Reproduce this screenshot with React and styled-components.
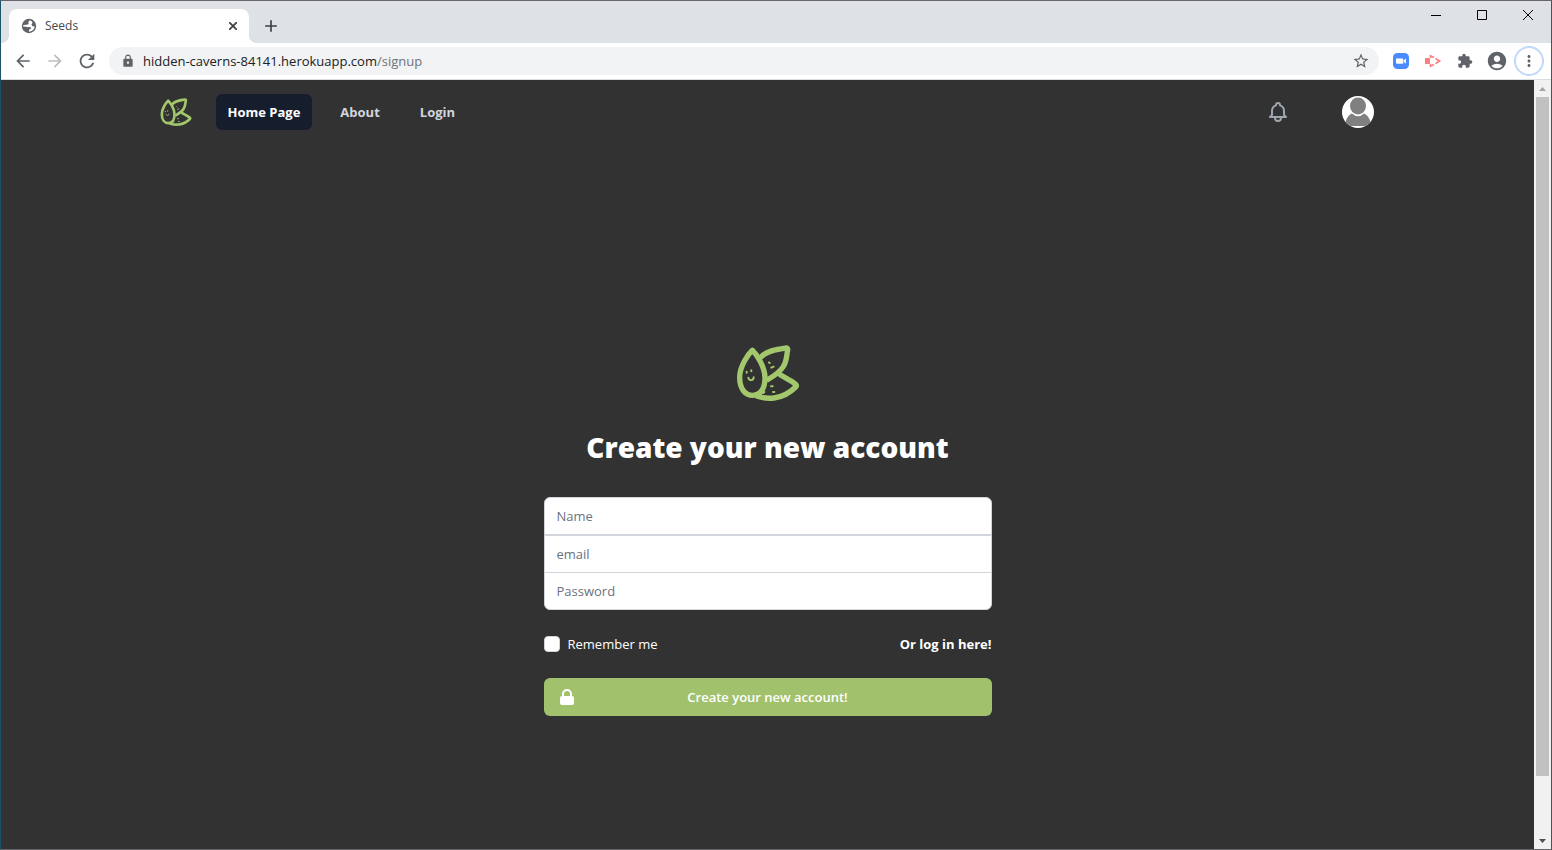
import React from "react";
import styled, { createGlobalStyle, css } from "styled-components";
import {
  MdArrowBack,
  MdArrowForward,
  MdRefresh,
  MdLock,
  MdStarBorder,
  MdExtension,
  MdAccountCircle,
  MdMoreVert,
  MdAdd,
} from "react-icons/md";

const GlobalStyle = createGlobalStyle`
  *, *::before, *::after { box-sizing: border-box; }
  body {
    margin: 0;
    font-family: "Open Sans", "Noto Sans", sans-serif;
    font-size: 13px;
    line-height: 20px;
  }
  button, input { font: inherit; margin: 0; }
  button { padding: 0; border: 0; background: none; color: inherit; cursor: pointer; }
  a { text-decoration: none; }
  h1 { margin: 0; }
  svg { display: block; flex-shrink: 0; }
`;

const Window = styled.div`
  display: flex;
  flex-direction: column;
  height: 100vh;
  border: 1px solid #666668;
  border-left-color: #1b5468;
  border-right-color: #4b5066;
  background: #323232;
`;

/* Browser frame */

const TabStrip = styled.div`
  display: flex;
  flex-shrink: 0;
  height: 42px;
  padding-left: 8px;
  background: #dee1e6;
`;

const flare = css`
  content: "";
  position: absolute;
  bottom: 0;
  width: 8px;
  height: 8px;
`;

const Tab = styled.div`
  position: relative;
  display: flex;
  align-items: center;
  gap: 8px;
  width: 240px;
  margin-top: 8px;
  padding: 0 8px 0 12px;
  border-radius: 8px 8px 0 0;
  background: #fff;
  color: #45494d;
  font-size: 12px;

  &::before {
    ${flare}
    left: -8px;
    background: radial-gradient(circle at 0 0, #dee1e6 8px, #fff 8px);
  }
  &::after {
    ${flare}
    right: -8px;
    background: radial-gradient(circle at 100% 0, #dee1e6 8px, #fff 8px);
  }
`;

const TabTitle = styled.span`
  flex: 1;
`;

const IconButton = styled.button`
  display: flex;
  align-items: center;
  justify-content: center;
  flex-shrink: 0;
  width: ${(p) => p.$size || 28}px;
  height: ${(p) => p.$size || 28}px;
  border-radius: 50%;
  color: ${(p) => p.$color || "#5f6368"};
  ${(p) => p.$ring && "box-shadow: 0 0 0 1px #bcd4f8, inset 0 0 0 1px #bcd4f8;"}
`;

const NewTab = styled(IconButton)`
  margin: 11px 0 0 8px;
`;

const WindowControls = styled.div`
  display: flex;
  margin-left: auto;
`;

const WindowControl = styled.button`
  display: flex;
  align-items: center;
  justify-content: center;
  width: 46px;
  height: 28px;
`;

const Toolbar = styled.div`
  display: flex;
  align-items: center;
  gap: 8px;
  flex-shrink: 0;
  height: 37px;
  padding: 0 8px;
  border-bottom: 1px solid #dadce0;
  background: #fff;
`;

const ToolGroup = styled.div`
  display: flex;
  gap: 4px;
`;

const AddressBar = styled.div`
  display: flex;
  align-items: center;
  flex: 1;
  gap: 8px;
  min-width: 0;
  height: 28px;
  padding: 0 4px 0 12px;
  border-radius: 14px;
  background: #f1f3f4;
  color: #5f6368;
`;

const Address = styled.div`
  flex: 1;
  overflow: hidden;
  white-space: nowrap;
  color: #6f7377;
`;

const Host = styled.span`
  color: #202124;
`;

const Body = styled.div`
  display: flex;
  flex: 1;
  min-height: 0;
`;

const Viewport = styled.div`
  flex: 1;
  min-width: 0;
  overflow-y: auto;
  scrollbar-width: none;
`;

const ScrollBar = styled.div`
  display: flex;
  flex-direction: column;
  width: 17px;
  background: #f1f1f1;
`;

const ScrollButton = styled.button`
  display: flex;
  align-items: center;
  justify-content: center;
  width: 17px;
  height: 17px;
`;

const ScrollTrack = styled.div`
  flex: 1;
  padding: 0 2px;
`;

const ScrollThumb = styled.div`
  height: 92.4%;
  background: #c1c1c1;
`;

/* Page */

const NavBar = styled.nav`
  display: flex;
  align-items: center;
  max-width: 1280px;
  height: 64px;
  margin: 0 auto;
  padding: 0 34px 0 32px;
`;

const NavLinks = styled.div`
  display: flex;
  gap: 16px;
  margin-left: 24px;
`;

const NavLink = styled.a`
  padding: 8px 12px;
  border-radius: 6px;
  background: ${(p) => (p.$active ? "#161e2e" : "transparent")};
  color: ${(p) => (p.$active ? "#fff" : "#d2d6dc")};
  font-weight: 700;
`;

const NavActions = styled.div`
  display: flex;
  align-items: center;
  gap: 48px;
  margin-left: auto;
`;

const Main = styled.main`
  display: flex;
  align-items: center;
  justify-content: center;
  min-height: 100%;
  padding: 48px 32px;
`;

const SignUp = styled.form`
  display: flex;
  flex-direction: column;
  align-items: stretch;
  gap: 24px;
  width: 100%;
  max-width: 448px;
`;

const Brand = styled.header`
  display: flex;
  flex-direction: column;
  align-items: center;
  gap: 24px;
  margin-bottom: 8px;
`;

const Title = styled.h1`
  color: #fff;
  font-size: 28px;
  font-weight: 800;
  line-height: 36px;
  text-align: center;
  white-space: nowrap;
`;

const Fields = styled.div`
  display: flex;
  flex-direction: column;
`;

const Field = styled.input`
  width: 100%;
  height: 38px;
  padding: 8px 12px;
  border: 1px solid #d2d6dc;
  border-radius: 0;
  outline: 0;
  background: #fff;
  color: #161e2e;

  &::placeholder { color: #6b7280; opacity: 1; }
  &:first-child { border-radius: 6px 6px 0 0; }
  &:last-child { margin-top: -1px; border-radius: 0 0 6px 6px; }
`;

const Options = styled.div`
  display: flex;
  align-items: center;
  justify-content: space-between;
  color: #fff;
`;

const Remember = styled.label`
  display: flex;
  align-items: center;
  gap: 8px;
`;

const CheckBox = styled.input`
  appearance: none;
  width: 16px;
  height: 16px;
  border: 1px solid #d2d6dc;
  border-radius: 4px;
  background: #fff;

  &:checked { background: #a2c16d; }
`;

const LogInLink = styled.a`
  color: #fff;
  font-weight: 700;
`;

const Submit = styled.button`
  display: grid;
  grid-template-columns: 20px 1fr 20px;
  align-items: center;
  height: 38px;
  padding: 0 13px;
  border-radius: 6px;
  background: #a2c16d;
  color: #fff;
  font-weight: 600;
`;

function SeedsLogo({ size }) {
  return (
    <svg width={size} height={size} viewBox="48 18 192 192" fill="none" stroke="#a2c76c" strokeLinecap="round" strokeLinejoin="round" role="img" aria-label="Seeds">
      <g strokeWidth="16">
        <path d="M97 46C86 56 59 93 59 127C59 161 75 181 98 181C123 181 135 158 135 129C135 93 108 56 97 46Z" />
        <path d="M123 66C142 45 173 44 197 39Q204 38 203 45C199 63 201 79 189 96C180 111 163 122 145 133" />
        <path d="M180 119C193 128 214 136 227 148Q231 152 227 156C212 171 191 185 162 189Q137 192 112 184" />
      </g>
      <g strokeWidth="6">
        <path d="M80 110v3M94 106v3M85 128C87 138 101 138 101 127" />
        <path d="M147 82l2 2M161 95l-7 3M153 154h5M159 171h4M133 171l-3 3" />
      </g>
    </svg>
  );
}

function GlobeIcon() {
  return (
    <svg width="16" height="16" viewBox="0 0 16 16" aria-hidden="true">
      <circle cx="8" cy="8" r="7.2" fill="#5f6368" />
      <path fill="#fff" d="M8.6 2.3L7.2 4.3L7.8 6L5.8 6.8L2.3 6.9L2.2 8.6L5 8.7L6.9 9.2L9.4 9L10.2 10.6L8.2 11.6L7.8 13.8C11 13.8 13.3 11.6 13.8 8.6L11.6 8.3L10.4 6.7L11.6 4.6L10.4 3Z" />
    </svg>
  );
}

function CloseIcon() {
  return (
    <svg width="8" height="8" viewBox="0 0 8 8" stroke="#3c4043" strokeWidth="1.7" aria-hidden="true">
      <path d="M0 0L8 8M8 0L0 8" />
    </svg>
  );
}

function ZoomIcon() {
  return (
    <svg width="16" height="16" viewBox="0 0 16 16" aria-hidden="true">
      <rect width="16" height="16" rx="4.5" fill="#4a8cff" />
      <path fill="#fff" d="M3 5.4h6q1.2 0 1.2 1.2v4.2H4.4Q3 10.8 3 9.4ZM10.8 7.2L13 5.5v5.1l-2.2-1.5Z" />
    </svg>
  );
}

function RecorderIcon() {
  return (
    <svg width="16" height="16" viewBox="0 0 16 16" aria-hidden="true">
      <path fill="#ff7f7f" d="M0 5h5v6H0Z" />
      <path d="M5.5 5V2.7L9 4.5M10.5 5.3L14.5 8L10.5 10.7M9 11.5L5.5 13.3V11" fill="none" stroke="#ff7f7f" strokeWidth="1.6" />
      <path fill="#ff7f7f" d="M12.5 6.3L16 8l-3.5 1.7Z" />
    </svg>
  );
}

function BellIcon() {
  return (
    <svg width="24" height="24" viewBox="0 0 24 24" fill="none" stroke="#9fa6b2" strokeWidth="2" strokeLinecap="round" strokeLinejoin="round" aria-hidden="true">
      <path d="M15 17h5l-1.405-1.405A2.032 2.032 0 0118 14.158V11a6.002 6.002 0 00-4-5.659V5a2 2 0 10-4 0v.341C7.67 6.165 6 8.388 6 11v3.159c0 .538-.214 1.055-.595 1.436L4 17h5m6 0v1a3 3 0 11-6 0v-1m6 0H9" />
    </svg>
  );
}

function Avatar() {
  return (
    <svg width="32" height="32" viewBox="0 0 32 32" aria-hidden="true">
      <defs>
        <clipPath id="avatar-clip"><circle cx="16" cy="16" r="16" /></clipPath>
      </defs>
      <g clipPath="url(#avatar-clip)">
        <rect width="32" height="32" fill="#fff" />
        <path d="M3 30C3.500 23 6 19.500 10 17.500Q16 23 22 17.500C26 19.500 28.500 23 29 30Z" fill="#808080" />
        <ellipse cx="16" cy="10" rx="9" ry="9.500" fill="#fff" />
        <ellipse cx="16" cy="10" rx="8" ry="8.500" fill="#808080" />
      </g>
    </svg>
  );
}

function LockIcon() {
  return (
    <svg width="20" height="20" viewBox="0 0 20 20" fill="#fff" aria-hidden="true">
      <path fillRule="evenodd" clipRule="evenodd" d="M5 9V7a5 5 0 0110 0v2a2 2 0 012 2v5a2 2 0 01-2 2H5a2 2 0 01-2-2v-5a2 2 0 012-2zm8-2v2H7V7a3 3 0 016 0z" />
    </svg>
  );
}

function BrowserFrame() {
  return (
    <>
      <TabStrip>
        <Tab>
          <GlobeIcon />
          <TabTitle>Seeds</TabTitle>
          <IconButton $size={16} aria-label="Close tab"><CloseIcon /></IconButton>
        </Tab>
        <NewTab aria-label="New tab" $color="#3c4043"><MdAdd size={20} /></NewTab>
        <WindowControls>
          <WindowControl aria-label="Minimize">
            <svg width="10" height="10" stroke="#000"><path d="M0 5.5h10" /></svg>
          </WindowControl>
          <WindowControl aria-label="Maximize">
            <svg width="10" height="10" stroke="#000" fill="none"><path d="M.5 .5h9v9h-9Z" /></svg>
          </WindowControl>
          <WindowControl aria-label="Close window">
            <svg width="10" height="10" stroke="#000"><path d="M0 0l10 10M10 0L0 10" /></svg>
          </WindowControl>
        </WindowControls>
      </TabStrip>
      <Toolbar>
        <ToolGroup>
          <IconButton aria-label="Back"><MdArrowBack size={20} /></IconButton>
          <IconButton aria-label="Forward" $color="#bbbdbf"><MdArrowForward size={20} /></IconButton>
          <IconButton aria-label="Reload"><MdRefresh size={22} /></IconButton>
        </ToolGroup>
        <AddressBar>
          <MdLock size={14} />
          <Address role="textbox" aria-label="Address" tabIndex={0}>
            <Host>hidden-caverns-84141.herokuapp.com</Host>/signup
          </Address>
          <IconButton aria-label="Bookmark this page"><MdStarBorder size={18} /></IconButton>
        </AddressBar>
        <ToolGroup>
          <IconButton aria-label="Meetings"><ZoomIcon /></IconButton>
          <IconButton aria-label="Screen recorder"><RecorderIcon /></IconButton>
          <IconButton aria-label="Extensions"><MdExtension size={16} /></IconButton>
          <IconButton aria-label="Profile"><MdAccountCircle size={22} /></IconButton>
          <IconButton aria-label="Menu" $ring><MdMoreVert size={18} /></IconButton>
        </ToolGroup>
      </Toolbar>
    </>
  );
}

export default function App() {
  return (
    <>
      <GlobalStyle />
      <Window>
        <BrowserFrame />
        <Body>
          <Viewport>
            <NavBar>
              <SeedsLogo size={32} />
              <NavLinks>
                <NavLink href="#home" $active>Home Page</NavLink>
                <NavLink href="#about">About</NavLink>
                <NavLink href="#login">Login</NavLink>
              </NavLinks>
              <NavActions>
                <IconButton $size={32} aria-label="Notifications"><BellIcon /></IconButton>
                <IconButton $size={32} aria-label="Account"><Avatar /></IconButton>
              </NavActions>
            </NavBar>
            <Main>
              <SignUp onSubmit={(e) => e.preventDefault()}>
                <Brand>
                  <SeedsLogo size={64} />
                  <Title>Create your new account</Title>
                </Brand>
                <Fields>
                  <Field type="text" placeholder="Name" aria-label="Name" />
                  <Field type="email" placeholder="email" aria-label="email" />
                  <Field type="password" placeholder="Password" aria-label="Password" />
                </Fields>
                <Options>
                  <Remember>
                    <CheckBox type="checkbox" />
                    Remember me
                  </Remember>
                  <LogInLink href="#login">Or log in here!</LogInLink>
                </Options>
                <Submit type="submit">
                  <LockIcon />
                  Create your new account!
                </Submit>
              </SignUp>
            </Main>
          </Viewport>
          <ScrollBar>
            <ScrollButton aria-label="Scroll up">
              <svg width="7" height="4" fill="#a3a3a3"><path d="M0 4L3.5 0L7 4Z" /></svg>
            </ScrollButton>
            <ScrollTrack><ScrollThumb /></ScrollTrack>
            <ScrollButton aria-label="Scroll down">
              <svg width="7" height="4" fill="#505050"><path d="M0 0L3.5 4L7 0Z" /></svg>
            </ScrollButton>
          </ScrollBar>
        </Body>
      </Window>
    </>
  );
}
